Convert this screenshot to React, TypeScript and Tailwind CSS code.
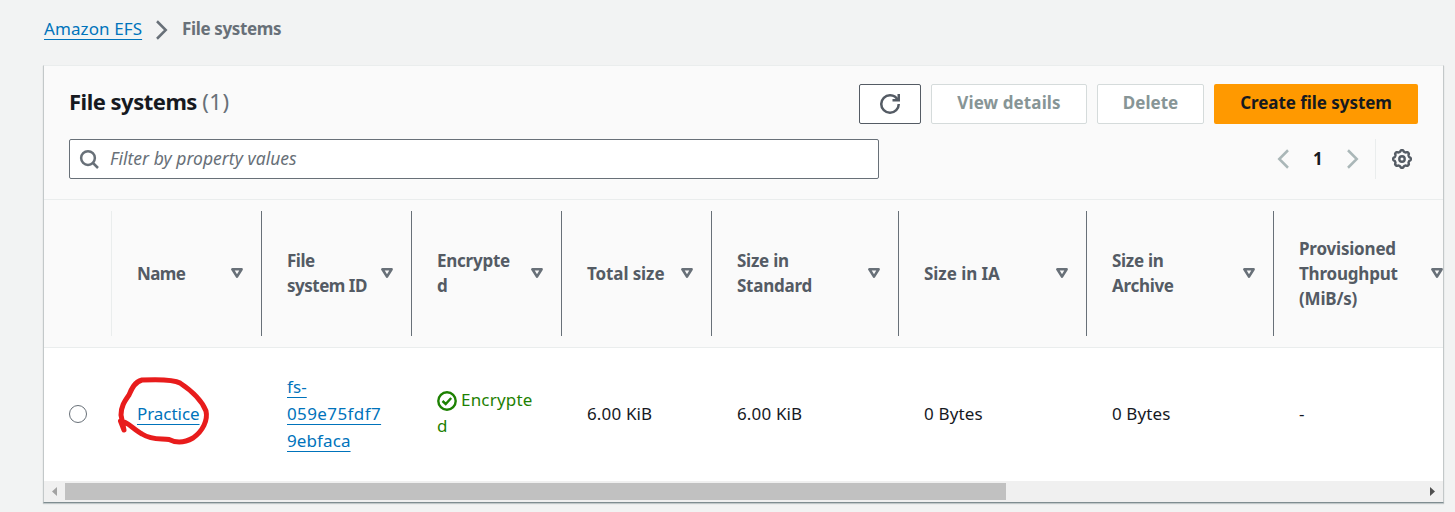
import React from "react";

const columns = [
  { lines: ["Name"], tracking: "tracking-[-0.65px]" },
  { lines: ["File", "system ID"], tracking: "tracking-[-0.5px]" },
  { lines: ["Encrypte", "d"], tracking: "tracking-[-0.25px]" },
  { lines: ["Total size"], tracking: "tracking-[-0.1px]" },
  { lines: ["Size in", "Standard"], tracking: "tracking-[-0.25px]" },
  { lines: ["Size in IA"], tracking: "tracking-[-0.05px]" },
  { lines: ["Size in", "Archive"], tracking: "tracking-[-0.3px]" },
  { lines: ["Provisioned", "Throughput", "(MiB/s)"], tracking: "tracking-[-0.2px]" },
];

const gridCols = "grid grid-cols-[68px_150px_150px_150px_150px_187px_188px_187px_188px]";

function Chevron({ flip, className }: { flip?: boolean; className: string }) {
  return (
    <svg viewBox="0 0 16 16" className={`size-5 shrink-0 ${className}`} fill="none" stroke="currentColor" strokeWidth="2">
      <path d={flip ? "M12 1 5 8l7 7" : "M4 1l7 7-7 7"} />
    </svg>
  );
}

function SortIcon() {
  return (
    <svg viewBox="0 0 12 10" className="mb-px h-[10px] w-3 shrink-0" fill="none" stroke="#687078" strokeWidth="2.6" strokeLinejoin="round">
      <path d="M1.4 1.3h9.2L6 8.6z" />
    </svg>
  );
}

function GearIcon() {
  const points: string[] = [];
  for (let i = 0; i < 128; i++) {
    const a = (i / 128) * Math.PI * 2;
    const r = 8.1 + 0.75 * Math.tanh(2 * Math.cos(8 * a));
    points.push(`${(10 + r * Math.cos(a)).toFixed(2)} ${(10 + r * Math.sin(a)).toFixed(2)}`);
  }
  return (
    <svg viewBox="0 0 20 20" className="size-5" fill="none" stroke="#545b64" strokeWidth="2.4" strokeLinejoin="round">
      <path d={`M${points.join("L")}Z`} />
      <circle cx="10" cy="10" r="2.7" />
    </svg>
  );
}

function Link({ children }: { children: React.ReactNode }) {
  return (
    <a className="text-[#0073bb] underline decoration-1 underline-offset-[4px] [text-decoration-skip-ink:none]">{children}</a>
  );
}

export default function App() {
  return (
    <div className="h-[512px] w-[1455px] overflow-hidden bg-[#f2f3f3] pl-[43px] font-['Noto_Sans','Open_Sans',sans-serif] text-[17px] leading-[25px] tracking-[0.1px] text-[#16191f]">
      <nav className="flex h-[65px] items-start pt-[16px] pl-px">
        <span className="w-[98px] whitespace-nowrap"><Link>Amazon EFS</Link></span>
        <Chevron className="mt-[4px] ml-[10px] text-[#687078]" />
        <span className="ml-[10px] font-bold tracking-[-0.35px] text-[#687078]">File systems</span>
      </nav>

      <main className="w-[1401px] border border-t-[#eaeded] border-r-[#c3c8c9] border-b-[#7f8d91] border-l-[#c3c8c9] bg-white shadow-[0_1px_1px_rgba(0,28,36,0.2)]">
        <header className="h-[134px] border-b border-[#eaeded] bg-[#fafafa] pt-[18px] pr-[25px] pl-[25px]">
          <div className="flex h-10 items-center">
            <h1 className="mb-[6px] text-[22px] font-bold tracking-[-0.5px]">
              File systems <span className="font-normal tracking-[0.6px] text-[#687078]">(1)</span>
            </h1>
            <div className="ml-auto flex gap-[10px] font-bold">
              <button className="flex h-10 w-[62px] items-center justify-center rounded-[2px] border border-[#545b64] bg-white">
                <svg viewBox="0 0 16 16" className="size-5" fill="none" stroke="#545b64" strokeWidth="2">
                  <path d="M10 5h5V0" />
                  <path d="M15 8a6.957 6.957 0 0 1-7 7 6.957 6.957 0 0 1-7-7 6.957 6.957 0 0 1 7-7 6.87 6.87 0 0 1 6.3 4" />
                </svg>
              </button>
              <button className="h-10 w-[156px] rounded-[2px] border border-[#d5dbdb] bg-white pb-[3px] tracking-[0.1px] text-[#879596]">View details</button>
              <button className="h-10 w-[107px] rounded-[2px] border border-[#d5dbdb] bg-white pb-[3px] tracking-[0px] text-[#879596]">Delete</button>
              <button className="h-10 w-[204px] rounded-[2px] bg-[#ff9900] pb-[3px] tracking-[-0.05px]">Create file system</button>
            </div>
          </div>
          <div className="mt-[15px] flex h-10 items-center">
            <div className="flex h-10 w-[810px] items-center rounded-[2px] border border-[#687078] bg-white pl-[9px]">
              <svg viewBox="0 0 16 16" className="size-5" fill="none" stroke="#687078" strokeWidth="2">
                <circle cx="7.2" cy="7.2" r="5.5" />
                <path d="m11 11 4.2 4.2" />
              </svg>
              <span className="mb-[2px] ml-[11px] text-[17.5px] tracking-[0.03px] text-[#687078] italic">Filter by property values</span>
            </div>
            <div className="ml-auto flex h-10 items-center pr-[6px]">
              <Chevron flip className="text-[#aab7b8]" />
              <span className="mb-[2px] w-[50px] text-center font-bold">1</span>
              <Chevron className="text-[#aab7b8]" />
              <span className="mr-4 ml-[12px] h-10 w-px bg-[#eaeded]" />
              <GearIcon />
            </div>
          </div>
        </header>

        <div className="w-[1399px] overflow-hidden">
          <div className={`${gridCols} h-[148px] w-[1418px] border-b border-[#eaeded] bg-[#fafafa] py-[11px] font-bold text-[#545b64]`}>
            <div className="border-r border-[#eaeded]" />
            {columns.map((c) => (
              <div key={c.lines.join(" ")} className="flex items-center justify-between border-r border-[#687078] pr-[18px] pl-[25px]">
                <span className={`mb-px ${c.tracking}`}>
                  {c.lines.map((l) => <span key={l} className="block whitespace-nowrap">{l}</span>)}
                </span>
                <SortIcon />
              </div>
            ))}
          </div>

          <div className={`${gridCols} h-[133px] w-[1418px] items-center bg-white pb-[2px]`}>
            <div className="pt-px pl-[25px]"><span className="block size-[18px] rounded-full border border-[#687078]" /></div>
            <div className="relative pl-[25px] tracking-[-0.05px]">
              <Link>Practice</Link>
              <svg viewBox="115 370 100 80" className="absolute top-[-31px] left-[3px] h-[80px] w-[100px]" fill="none" stroke="#e81c1c" strokeWidth="5" strokeLinecap="round" strokeLinejoin="round">
                <path d="M124 430L120.5 421C127 421 133 429 142 434C153 441 162 438 169 439.500C176 443 184 443 193 438C203 431 208 420 206 411C201 398 189 389 180 383C173 379 153 379.500 142 380C134 382 131 390 129 395C124 402 121 407 121 415Z" />
              </svg>
            </div>
            <div className="pl-[25px] leading-[27px]">
              <Link>fs-</Link><br /><span className="tracking-[0.4px]"><Link>059e75fdf7</Link></span><br /><Link>9ebfaca</Link>
            </div>
            <div className="pl-[25px] leading-[27px] text-[#1d8102]">
              <div className="flex items-center">
                <svg viewBox="0 0 20 20" className="mr-1 size-5 shrink-0" fill="none" stroke="#1d8102" strokeWidth="2.4">
                  <circle cx="10" cy="10" r="8.7" /><path d="m5.500 10 3.200 3 5.500-6" />
                </svg>
                <span className="-mt-[2px] tracking-[0.2px]">Encrypte</span>
              </div>
              <div className="-mt-px">d</div>
            </div>
            <div className="pl-[25px] tracking-[0.15px]">6.00 KiB</div>
            <div className="pl-[25px] tracking-[0.15px]">6.00 KiB</div>
            <div className="pl-[25px] tracking-[0.15px]">0 Bytes</div>
            <div className="pl-[25px]">0 Bytes</div>
            <div className="pl-[25px]">-</div>
          </div>
        </div>

        <div className="flex h-[21px] items-center bg-[#f0f0f0]">
          <svg viewBox="0 0 21 21" className="size-[21px]"><path d="M13 6v9L8 10.500z" fill="#a3a3a3" /></svg>
          <div className="h-[17px] w-[941px] bg-[#c1c1c1]" />
          <svg viewBox="0 0 21 21" className="ml-auto size-[21px]"><path d="M8 6v9l5-4.500z" fill="#505050" /></svg>
        </div>
      </main>
    </div>
  );
}
